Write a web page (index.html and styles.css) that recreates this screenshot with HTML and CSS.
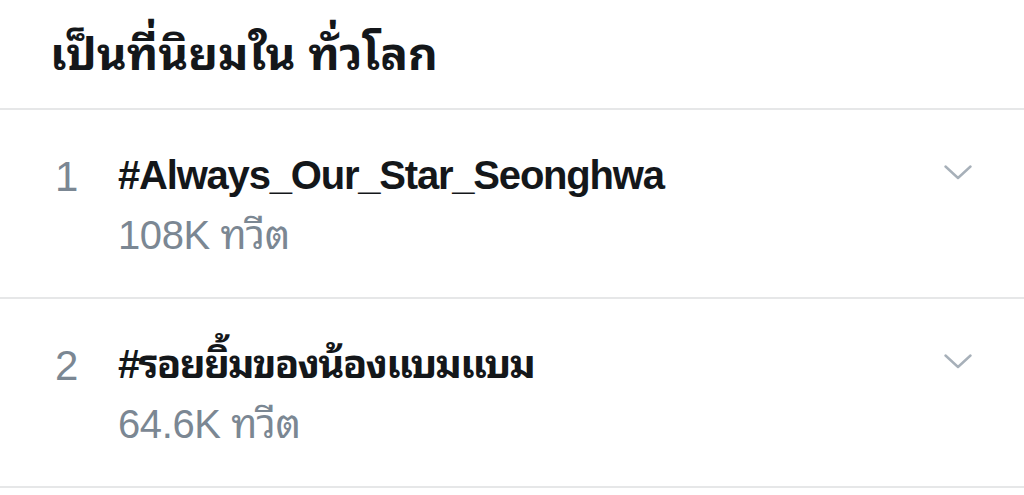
FILE: index.html
```html
<!DOCTYPE html>
<html lang="th">
<head>
<meta charset="utf-8">
<title>เป็นที่นิยมใน ทั่วโลก</title>
<link rel="stylesheet" href="styles.css">
</head>
<body>
<main class="trends">
  <header class="trends-header">
    <h1 class="trends-title">เป็นที่นิยมใน ทั่วโลก</h1>
  </header>
  <section class="trend">
    <div class="trend-rank">1</div>
    <div class="trend-body">
      <div class="trend-name">#Always_Our_Star_Seonghwa</div>
      <div class="trend-count">108K ทวีต</div>
    </div>
    <svg class="trend-chevron" viewBox="0 0 28 15" aria-hidden="true">
      <polyline points="1.5,1.5 14,13 26.5,1.5" />
    </svg>
  </section>
  <section class="trend">
    <div class="trend-rank">2</div>
    <div class="trend-body">
      <div class="trend-name trend-name--thai">#รอยยิ้มของน้องแบมแบม</div>
      <div class="trend-count">64.6K ทวีต</div>
    </div>
    <svg class="trend-chevron" viewBox="0 0 28 15" aria-hidden="true">
      <polyline points="1.5,1.5 14,13 26.5,1.5" />
    </svg>
  </section>
</main>
</body>
</html>
```

FILE: styles.css
```css
html, body {
  margin: 0;
  padding: 0;
  background: #ffffff;
}

body {
  font-family: "Liberation Sans", "Noto Sans Thai Looped", "Noto Sans Thai", "Noto Sans", sans-serif;
  color: #14171a;
}

.trends {
  width: 1024px;
}

.trends-header {
  height: 108px;
  display: flex;
  align-items: center;
  padding-left: 50px;
  border-bottom: 2px solid #e6e7e8;
}

.trends-title {
  margin: 0;
  font-size: 46px;
  font-weight: 700;
  line-height: 1;
  letter-spacing: 0;
}

.trend {
  height: 187px;
  display: flex;
  align-items: flex-start;
  padding: 0 52px 0 55px;
  border-bottom: 2px solid #e6e7e8;
}

.trend-rank {
  width: 63px;
  padding-top: 42px;
  font-size: 42px;
  line-height: 50px;
  color: #7b8793;
}

.trend-body {
  flex: 1;
  padding-top: 40px;
}

.trend-name {
  font-size: 40px;
  font-weight: 700;
  line-height: 50px;
  letter-spacing: -1.2px;
  color: #14171a;
}

.trend-name--thai {
  letter-spacing: -1.7px;
}

.trend-count {
  margin-top: 10px;
  font-size: 40px;
  line-height: 50px;
  letter-spacing: -0.4px;
  color: #7b8793;
}

.trend-chevron {
  width: 28px;
  height: 15px;
  margin-top: 55px;
  fill: none;
  stroke: #a7b0b9;
  stroke-width: 2.4;
  stroke-linecap: round;
  stroke-linejoin: round;
}
```
